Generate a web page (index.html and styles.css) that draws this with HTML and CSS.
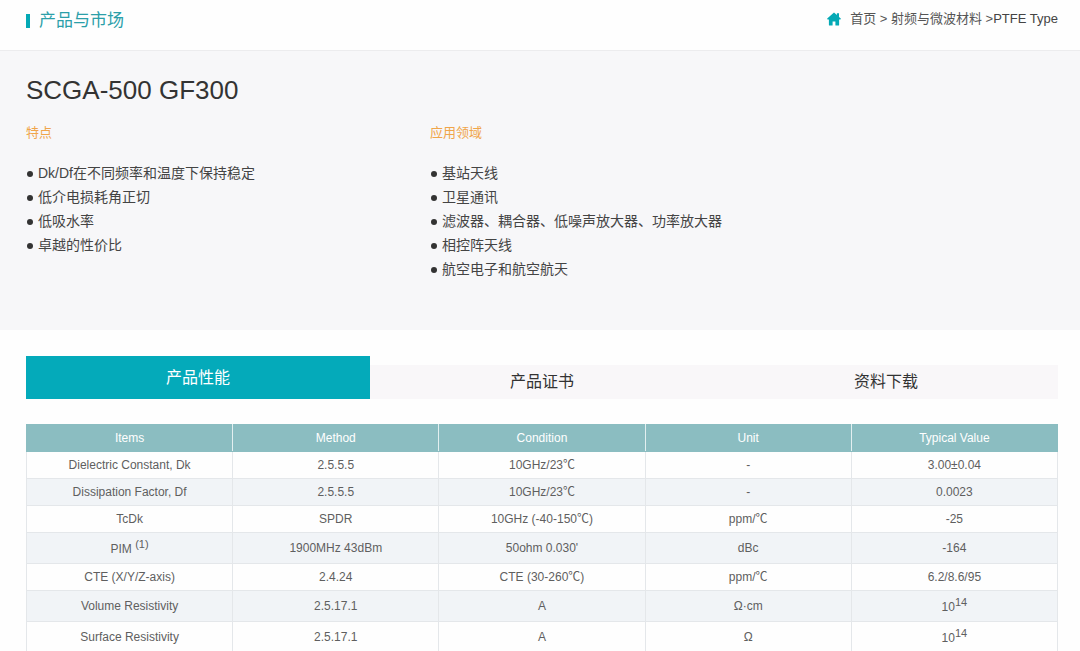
FILE: index.html
```html
<!DOCTYPE html>
<html lang="zh-CN">
<head>
<meta charset="utf-8">
<meta name="viewport" content="width=device-width, initial-scale=1">
<title>SCGA-500 GF300</title>
<link rel="stylesheet" href="styles.css">
</head>
<body>
<header class="topbar">
  <h2 class="section-title">产品与市场</h2>
  <nav class="breadcrumb" aria-label="breadcrumb">
    <svg class="home-icon" viewBox="0 0 14 14" aria-hidden="true"><path d="M7 0.4 0.2 6.6q-.2.9.7.9h1V13q0 .6.6.6h2.6q.5 0 .5-.6V9.4h2.8V13q0 .6.5.6h2.6q.6 0 .6-.6V7.500h1q.9 0 .7-.9L12 4.900V1.300H9.900v1.700z"/></svg>
    <span><a href="#">首页</a> &gt; <a href="#">射频与微波材料</a> &gt;<a class="current" href="#">PTFE Type</a></span>
  </nav>
</header>

<section class="hero">
  <h1 class="product-name">SCGA-500 GF300</h1>
  <div class="columns">
    <div>
      <h3 class="column-title">特点</h3>
      <ul class="points">
        <li>Dk/Df在不同频率和温度下保持稳定</li>
        <li>低介电损耗角正切</li>
        <li>低吸水率</li>
        <li>卓越的性价比</li>
      </ul>
    </div>
    <div>
      <h3 class="column-title">应用领域</h3>
      <ul class="points">
        <li>基站天线</li>
        <li>卫星通讯</li>
        <li>滤波器、耦合器、低噪声放大器、功率放大器</li>
        <li>相控阵天线</li>
        <li>航空电子和航空航天</li>
      </ul>
    </div>
  </div>
</section>

<main class="details">
  <div class="tabs" role="tablist">
    <button class="tab active" type="button" role="tab" aria-selected="true">产品性能</button>
    <button class="tab" type="button" role="tab" aria-selected="false">产品证书</button>
    <button class="tab" type="button" role="tab" aria-selected="false">资料下载</button>
  </div>
  <table class="specs">
    <thead>
      <tr><th>Items</th><th>Method</th><th>Condition</th><th>Unit</th><th>Typical Value</th></tr>
    </thead>
    <tbody>
      <tr><td>Dielectric Constant, Dk</td><td>2.5.5.5</td><td>10GHz/23℃</td><td>-</td><td>3.00±0.04</td></tr>
      <tr><td>Dissipation Factor, Df</td><td>2.5.5.5</td><td>10GHz/23℃</td><td>-</td><td>0.0023</td></tr>
      <tr><td>TcDk</td><td>SPDR</td><td>10GHz (-40-150℃)</td><td>ppm/℃</td><td>-25</td></tr>
      <tr class="tall"><td>PIM <sup>(1)</sup></td><td>1900MHz 43dBm</td><td>50ohm 0.030'</td><td>dBc</td><td>-164</td></tr>
      <tr><td>CTE (X/Y/Z-axis)</td><td>2.4.24</td><td>CTE (30-260℃)</td><td>ppm/℃</td><td>6.2/8.6/95</td></tr>
      <tr class="tall"><td>Volume Resistivity</td><td>2.5.17.1</td><td>A</td><td>Ω·cm</td><td>10<sup>14</sup></td></tr>
      <tr class="tall"><td>Surface Resistivity</td><td>2.5.17.1</td><td>A</td><td>Ω</td><td>10<sup>14</sup></td></tr>
    </tbody>
  </table>
</main>
</body>
</html>
```
FILE: styles.css
```css
* {
  box-sizing: border-box;
}

body {
  margin: 0;
  background: #fefefe;
  color: #333;
  font-family: "Liberation Sans", "Noto Sans CJK SC", sans-serif;
  font-size: 14px;
}

h1, h2, h3, ul {
  margin: 0;
  padding: 0;
  font-weight: 400;
}

a {
  color: inherit;
  text-decoration: none;
}

.topbar {
  display: flex;
  justify-content: space-between;
  align-items: flex-start;
  height: 51px;
  padding: 8px 22px 0 26px;
  border-bottom: 1px solid #ececee;
}

.section-title {
  display: flex;
  align-items: center;
  gap: 9px;
  color: #2b9fa9;
  font-size: 17px;
  line-height: 25px;
}

.section-title::before {
  content: "";
  width: 4px;
  height: 14px;
  background: #04a9b5;
}

.breadcrumb {
  display: flex;
  align-items: center;
  gap: 9px;
  color: #555;
  font-size: 13px;
  line-height: 21px;
}

.breadcrumb .current {
  color: #444;
}

.home-icon {
  width: 14px;
  height: 14px;
  fill: #04a9b5;
}

.hero {
  min-height: 279px;
  padding: 23px 26px;
  background: #f7f7f9;
}

.product-name {
  font-size: 26px;
  line-height: 32px;
}

.columns {
  display: grid;
  grid-template-columns: 404px 1fr;
  margin-top: 17px;
}

.column-title {
  color: #f0a54a;
  font-size: 13px;
  line-height: 20px;
}

.points {
  margin-top: 18px;
  list-style: none;
  color: #444;
  line-height: 24px;
}

.points li {
  display: flex;
  align-items: center;
  gap: 4px;
}

.points li::before {
  content: "";
  width: 6px;
  height: 6px;
  margin: 2px 1px 0;
  border-radius: 50%;
  background: #333;
}

.details {
  padding: 26px 22px 0 26px;
}

.tabs {
  display: grid;
  grid-template-columns: repeat(3, 1fr);
  align-items: end;
}

.tab {
  height: 34px;
  padding: 0 0 4px;
  border: 0;
  background: #f9f7f9;
  color: #333;
  font-family: inherit;
  font-size: 16px;
  cursor: pointer;
}

.tab.active {
  height: 43px;
  background: #04aaba;
  color: #fff;
}

.specs {
  width: 100%;
  margin-top: 25px;
  border-collapse: collapse;
  table-layout: fixed;
  color: #5f5f5f;
  font-size: 12px;
  line-height: 18px;
  text-align: center;
}

.specs th,
.specs td {
  height: 27px;
  padding: 0;
  border: 1px solid #e4e7ea;
}

.specs th {
  border-color: #8bbdc1;
  border-right-color: #e3eff0;
  background: #8bbdc1;
  color: #fff;
  font-weight: 400;
}

.specs th:last-child {
  border-right-color: #8bbdc1;
}

.specs tbody tr:nth-child(even) {
  background: #f1f4f7;
}

.specs .tall td {
  height: 31px;
}

.specs sup {
  font-size: 11px;
  line-height: 1;
}
```
